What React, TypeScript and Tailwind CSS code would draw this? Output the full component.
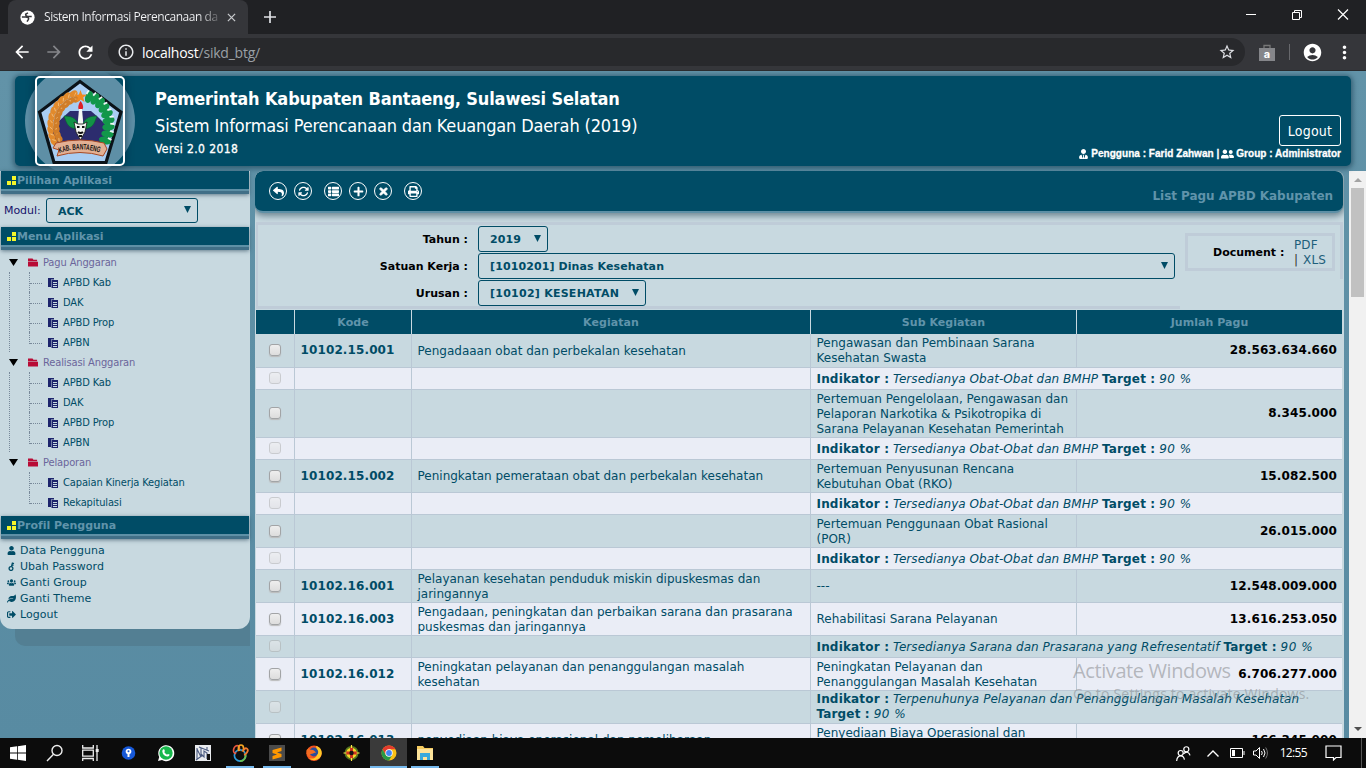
import React from "react";
import {
  FaReply, FaThList, FaPlus, FaTimes, FaPrint, FaUser, FaUserTie, FaUserFriends,
  FaUsers, FaLeaf, FaSignOutAlt,
} from "react-icons/fa";
import { FaArrowsRotate } from "react-icons/fa6";
import { MdArrowBack, MdArrowForward, MdRefresh, MdInfoOutline, MdStarBorder, MdAccountCircle, MdMoreVert } from "react-icons/md";

const verdana = "font-['DejaVu_Sans',sans-serif]";
const tahoma = "font-['DejaVu_Sans_Condensed','DejaVu_Sans',sans-serif] [font-stretch:condensed]";
const segoe = "font-['Open_Sans',sans-serif]";

function Globe() {
  return (
    <svg viewBox="0 0 16 16" className="h-[15px] w-[15px]">
      <circle cx="8" cy="8" r="7.6" fill="#fff" />
      <path d="M2 7.500H6C9 7.500 9.500 9 9 10L7.500 12.500M8.500 3 6 4.500Q6 7 9 7H12.500" fill="none" stroke="#35363a" strokeWidth="1.600" />
    </svg>
  );
}

function Browser() {
  return (
    <div className={`h-[71px] bg-[#202124] ${segoe}`}>
      <div className="flex h-[34px] items-stretch">
        <div className="ml-[8px] flex w-[240px] items-center rounded-t-[8px] bg-[#35363a] pl-[12px]">
          <Globe />
          <div className="ml-[9px] w-[176px] overflow-hidden whitespace-nowrap bg-gradient-to-r from-[#f4f5f7] from-88% to-[#f4f5f7]/15 bg-clip-text text-[12px] tracking-[-0.45px] text-transparent">
            Sistem Informasi Perencanaan da
          </div>
          <svg viewBox="0 0 10 10" className="ml-[7px] h-[9px] w-[9px]"><path d="M1 1 9 9M9 1 1 9" stroke="#c8cacd" strokeWidth="1.4" /></svg>
        </div>
        <svg viewBox="0 0 12 12" className="mt-[11px] ml-[16px] h-[12px] w-[12px]"><path d="M6 0V12M0 6H12" stroke="#dfe1e5" strokeWidth="1.7" /></svg>
        <div className="mt-[9px] ml-auto flex gap-[34px] pr-[17px]">
          <svg viewBox="0 0 12 12" className="h-[12px] w-[12px]"><path d="M1 5.5H11" stroke="#fff" /></svg>
          <svg viewBox="0 0 12 12" className="h-[12px] w-[12px]" fill="none" stroke="#fff"><path d="M1.5 3.5H8.5V10.5H1.5ZM3.5 3.5V1.5H10.5V8.5H8.5" /></svg>
          <svg viewBox="0 0 12 12" className="h-[12px] w-[12px]"><path d="M1 .5 11 10.5M11 .5 1 10.5" stroke="#fff" strokeWidth="1.2" /></svg>
        </div>
      </div>
      <div className="flex h-[37px] items-center border-b border-[#2a2c2f] bg-[#35363a] text-white">
        <MdArrowBack className="ml-[12px] h-[20px] w-[20px]" />
        <MdArrowForward className="ml-[12px] h-[20px] w-[20px] text-[#85868a]" />
        <MdRefresh className="ml-[11px] h-[21px] w-[21px]" />
        <div className="ml-[12px] flex h-[28px] w-[1137px] items-center rounded-full bg-[#28292c] pl-[9px]">
          <MdInfoOutline className="h-[18px] w-[18px] text-[#e8eaed]" />
          <div className="ml-[7px] text-[14px] tracking-[-0.23px] text-[#9aa0a6]"><span className="text-white">localhost</span>/sikd_btg/</div>
          <MdStarBorder className="mr-[9px] ml-auto h-[18px] w-[18px] text-[#dfe1e5]" />
        </div>
        <svg viewBox="0 0 16 17" className="ml-[14px] h-[17px] w-[16px]">
          <path d="M0 4H16V17H0Z" fill="#85868a" /><path d="M5 4V1.500H11V4" fill="none" stroke="#777" strokeWidth="1.3" />
          <text x="8" y="13.500" textAnchor="middle" fontSize="11" fontWeight="700" fill="#fff" fontFamily="Inter">a</text>
        </svg>
        <div className="ml-[14px] h-[16px] w-px bg-[#67686c]" />
        <MdAccountCircle className="ml-[12px] h-[21px] w-[21px]" />
        <MdMoreVert className="ml-[11px] h-[21px] w-[21px]" />
      </div>
    </div>
  );
}

const wheat = [[38, 18.5], [32, 20.5], [27, 24], [22.500, 28.500], [19.500, 33.500], [17.500, 39], [16.500, 45], [16.500, 51], [17.500, 57], [19.500, 62]];
const cotton = [[52, 19], [58, 21], [63, 25], [67, 30], [70, 36], [71.500, 42.500], [71.500, 49], [70.500, 56], [68, 62.500]];

function Emblem() {
  return (
    <svg viewBox="0 0 86 86" className="h-[86px] w-[86px]">
      <path d="M43 3.500 84 34 69 84.500H17L2.500 34Z" fill="#a9cdf3" stroke="#0b1218" strokeWidth="3.200" />
      <path d="M33 33H54L62 40 74 52 70 65H17L14 54 22 43Z" fill="#2c2c6e" />
      {wheat.map(([x, y], i) => (
        <g key={i} transform={`rotate(${60 - i * 11} ${x} ${y})`}>
          <ellipse cx={x - 3} cy={y} rx="3.100" ry="4.300" fill="#e28a2c" />
          <ellipse cx={x + 3} cy={y} rx="3.100" ry="4.300" fill="#d07d28" />
          <path d={`M${x - 3} ${y - 3}l2 3M${x + 3} ${y}l-2 3`} stroke="#f3bd78" strokeWidth=".9" />
        </g>
      ))}
      {cotton.map(([x, y], i) => (
        <g key={i} transform={`rotate(${-70 + i * 11} ${x} ${y})`}>
          <ellipse cx={x} cy={y} rx="6.200" ry="3.700" fill="#12974a" />
          <path d={`M${x + 2} ${y - 3.300}l4 .8`} stroke="#eef8f3" strokeWidth="1.700" />
        </g>
      ))}
      <path d="m43.500 12 1.600 4.500 4.800.2-3.700 2.900 1.300 4.500-4-2.500-4 2.500 1.300-4.500-3.700-2.900 4.800-.2Z" fill="#f18a21" />
      <path d="M43.500 23c4 5 3 9 0 9s-3-4 0-9Z" fill="#dc2027" />
      <path d="M42 31h3L46.500 48H40.500Z" fill="#f7f8f3" />
      <path d="M42 51C31 51 30 46 27 38c9 0 14 3 15 13ZM45 51c11 0 12-5 15-13-9 0-14 3-15 13Z" fill="#129246" stroke="#0a6230" strokeWidth=".6" />
      <path d="M37 44 41 46H46L50 44 48 54 43.500 62 39 54Z" fill="#f5f5f0" stroke="#161616" strokeWidth=".8" />
      <path d="M40 49h2.500M45 49h2.500M41 54q2.500 2 5 0M42 58h3" stroke="#111" strokeWidth="2" />
      <path d="M19 65Q43 59 67 65L70 71 66 78Q43 71 20 78L22 72 16 70Z" fill="#e3b094" stroke="#a84924" />
      <path id="ribbon" d="M22.500 75Q43 68 64.500 75" fill="none" />
      <text fontSize="8" fontWeight="700" fill="#111" fontFamily="Liberation Sans Narrow, Liberation Sans" textLength="41" lengthAdjust="spacingAndGlyphs"><textPath href="#ribbon">KAB. BANTAENG</textPath></text>
    </svg>
  );
}

function Header() {
  return (
    <div className="relative mt-[5px] ml-[15px] flex h-[90px] w-[1336px] rounded-[5px] bg-[#004c66] text-white shadow-[0_1px_5px_2px_rgba(30,70,90,.65)]">
      <div className="absolute top-[-10px] left-[10px] h-[110px] w-[110px] rounded-full bg-[#5e8fa6]" />
      <div className="relative ml-[20px] h-[90px] w-[90px] rounded-[5px] border-2 border-white shadow-[0_0_8px_rgba(0,40,60,.7)]"><Emblem /></div>
      <div className={`ml-[30px] flex-1 whitespace-nowrap ${tahoma}`}>
        <div className="mt-[12px] h-[22px] text-[18px] leading-[22px] font-bold tracking-[-0.15px]">Pemerintah Kabupaten Bantaeng, Sulawesi Selatan</div>
        <div className="mt-[4px] h-[24px] text-[18px] leading-[24px] tracking-[-0.15px]">Sistem Informasi Perencanaan dan Keuangan Daerah (2019)</div>
        <div className="mt-[2px] text-[12px] leading-[18px] tracking-[0.4px] [-webkit-text-stroke:0.3px_white]">Versi 2.0 2018</div>
      </div>
      <div className="mr-[10px] flex flex-col items-end">
        <div className={`mt-[39px] flex h-[31px] w-[62px] items-center justify-center rounded-[3px] border border-white pt-[2px] text-[14px] tracking-[0.2px] ${tahoma}`}>Logout</div>
        <div className="mt-[2px] flex items-center font-['Liberation_Sans',sans-serif] text-[10px] leading-[12px] font-bold tracking-[0.03px] whitespace-nowrap [-webkit-text-stroke:0.3px_white]">
          <FaUserTie className="mr-[3px] h-[10px] w-[9px]" />Pengguna : Farid Zahwan |<FaUserFriends className="mx-[2px] h-[12px] w-[13px]" />Group : Administrator
        </div>
      </div>
    </div>
  );
}

function SectionTitle({ children }: { children: string }) {
  return (
    <div className={`ml-px h-[23px] w-[248px] border-b-[3px] border-[#416f87] bg-[#5e90a6] shadow-[0_1px_4px_rgba(30,60,80,.6)] ${verdana}`}>
      <div className="flex h-[18px] items-center bg-[#004c66] pl-[6px] text-[11px] font-bold tracking-[-0.02px] text-[#6094ab]">
        <svg viewBox="0 0 9 9" className="mt-[1px] mr-px h-[9px] w-[9px]" fill="#f4f52a"><path d="M5 0H9V4H5ZM0 5H4V9H0ZM5 5H9V9H5Z" /></svg>
        <span className="pt-[2px]">{children}</span>
      </div>
    </div>
  );
}

function Select({ label, className }: { label: string; className: string }) {
  return (
    <div className={`flex items-center justify-between rounded-[3px] border border-[#004c66] pl-[11px] text-[#004c66] ${className}`}>
      <span className="pt-[2px]">{label}</span>
      <svg viewBox="0 0 7 7" className="mr-[6px] mb-[2px] h-[7px] w-[7px]" fill="#004c66"><path d="M0 0H7L3.500 7Z" /></svg>
    </div>
  );
}

const tree = [
  { name: "Pagu Anggaran", items: ["APBD Kab", "DAK", "APBD Prop", "APBN"] },
  { name: "Realisasi Anggaran", items: ["APBD Kab", "DAK", "APBD Prop", "APBN"] },
  { name: "Pelaporan", items: ["Capaian Kinerja Kegiatan", "Rekapitulasi"] },
];

function PageIcon() {
  return (
    <svg viewBox="0 0 10 10" className="h-[10px] w-[10px]">
      <path d="M0 0H6V1.500H3V9H0Z" fill="#1c246c" /><path d="M3.500 2H10V10H3.500Z" fill="#1c246c" />
      <path d="M5 4.500H9M5 6.500H9M5 8.500H9" stroke="#c8d9e0" />
    </svg>
  );
}

function Tree() {
  return (
    <div className={`h-[266px] pt-[2px] text-[11px] leading-[22px] tracking-[-0.12px] ${tahoma}`}>
      {tree.map((g, gi) => (
        <div key={g.name}>
          <div className="flex h-[20px] items-center text-[#6b659b]">
            <svg viewBox="0 0 9 7" className="ml-[9px] h-[7px] w-[9px]"><path d="M0 0H9L4.500 7Z" /></svg>
            <svg viewBox="0 0 11 9" className="mt-[1px] ml-[10px] h-[9px] w-[10px]"><path d="M0 0H5L6 1.500H10V3H0ZM0 3.600H11V9H0Z" fill="#b80c36" /></svg>
            <span className="ml-[5px] pt-[2px]">{g.name}</span>
          </div>
          <div className={`ml-[9px] ${gi < 2 ? "border-l border-dotted border-[#789]" : "border-l border-transparent"}`}>
            {g.items.map((t, i) => (
              <div key={i} className="ml-[19px] flex h-[20px] text-[#004c66]">
                <div className={`w-px border-l border-dotted border-[#789] ${i === g.items.length - 1 ? "h-[12px]" : "h-[20px]"}`} />
                <div className="h-[12px] w-[12px] border-b border-dotted border-[#789]" />
                <div className="mt-[6px] ml-[6px]"><PageIcon /></div>
                <span className="ml-[5px]">{t}</span>
              </div>
            ))}
          </div>
        </div>
      ))}
    </div>
  );
}

function KeyIcon({ className }: { className?: string }) {
  return (
    <svg viewBox="0 0 8 9" className={className} fill="none" stroke="#004c66" strokeWidth="1.300">
      <circle cx="3.500" cy="6.500" r="1.900" /><path d="M4 4.500 5 .7M4.700 1.200 6.500 1.700M4.300 2.900 6 3.400" />
    </svg>
  );
}

const profile = [
  { Icon: FaUser, name: "Data Pengguna" },
  { Icon: KeyIcon, name: "Ubah Password" },
  { Icon: FaUsers, name: "Ganti Group" },
  { Icon: FaLeaf, name: "Ganti Theme" },
  { Icon: FaSignOutAlt, name: "Logout" },
];

function Sidebar() {
  return (
    <div className={`mt-[5px] h-[572px] w-[250px] ${verdana}`}>
      <div className="relative z-10 h-[458px] rounded-b-[12px] bg-[#c8d9e0]">
        <SectionTitle>Pilihan Aplikasi</SectionTitle>
        <div className="flex h-[33px] pt-[4px] pl-[4px] text-[11px] leading-[26px] tracking-[-0.05px] text-[#16116a]">
          <span className="w-[42px]">Modul:</span>
          <Select label="ACK" className="h-[25px] w-[152px] text-[11px] font-bold" />
        </div>
        <SectionTitle>Menu Aplikasi</SectionTitle>
        <Tree />
        <SectionTitle>Profil Pengguna</SectionTitle>
        <div className="pt-[4px]">
          {profile.map(({ Icon, name }) => (
            <div key={name} className="flex h-[16px] items-center pl-[7px] text-[11px] tracking-[0.02px] text-[#004c66]">
              <Icon className="mr-[4px] mb-px h-[9px] w-[9px]" />{name}
            </div>
          ))}
        </div>
      </div>
      <div className="mt-[-12px] ml-[15px] h-[29px] rounded-bl-[10px] bg-[#537f93]" />
    </div>
  );
}

function Round({ children, className = "" }: { children: React.ReactNode; className?: string }) {
  return <div className={`flex h-[18px] w-[18px] items-center justify-center rounded-full border-[1.5px] border-white text-[11px] ${className}`}>{children}</div>;
}

type Row = { kode?: string; kegiatan?: string; sub?: string[]; jumlah?: string; ind?: string; h: string };
const obat = "Tersedianya Obat-Obat dan BMHP";
const rows: Row[] = [
  { kode: "10102.15.001", kegiatan: "Pengadaaan obat dan perbekalan kesehatan", sub: ["Pengawasan dan Pembinaan Sarana", "Kesehatan Swasta"], jumlah: "28.563.634.660", h: "h-[34px]" },
  { ind: obat, h: "h-[22px]" },
  { sub: ["Pertemuan Pengelolaan, Pengawasan dan", "Pelaporan Narkotika & Psikotropika di", "Sarana Pelayanan Kesehatan Pemerintah"], jumlah: "8.345.000", h: "h-[48px]" },
  { ind: obat, h: "h-[22px]" },
  { kode: "10102.15.002", kegiatan: "Peningkatan pemerataan obat dan perbekalan kesehatan", sub: ["Pertemuan Penyusunan Rencana", "Kebutuhan Obat (RKO)"], jumlah: "15.082.500", h: "h-[33px]" },
  { ind: obat, h: "h-[22px]" },
  { sub: ["Pertemuan Penggunaan Obat Rasional", "(POR)"], jumlah: "26.015.000", h: "h-[33px]" },
  { ind: obat, h: "h-[22px]" },
  { kode: "10102.16.001", kegiatan: "Pelayanan kesehatan penduduk miskin dipuskesmas dan\njaringannya", sub: ["---"], jumlah: "12.548.009.000", h: "h-[33px]" },
  { kode: "10102.16.003", kegiatan: "Pengadaan, peningkatan dan perbaikan sarana dan prasarana\npuskesmas dan jaringannya", sub: ["Rehabilitasi Sarana Pelayanan"], jumlah: "13.616.253.050", h: "h-[33px]" },
  { ind: "Tersedianya Sarana dan Prasarana yang Refresentatif", h: "h-[22px]" },
  { kode: "10102.16.012", kegiatan: "Peningkatan pelayanan dan penanggulangan masalah\nkesehatan", sub: ["Peningkatan Pelayanan dan", "Penanggulangan Masalah Kesehatan"], jumlah: "6.706.277.000", h: "h-[33px]" },
  { ind: "Terpenuhunya Pelayanan dan Penanggulangan Masalah Kesehatan", h: "h-[33px]" },
  { kode: "10102.16.013", kegiatan: "penyediaan biaya operasional dan pemeliharaan", sub: ["Penyediaan Biaya Operasional dan", "Pemeliharaan"], jumlah: "166.345.000", h: "h-[33px]" },
];

const cols = "grid grid-cols-[39px_117px_399px_266px_265px]";

function Table() {
  return (
    <div className="ml-[1px] w-[1086px] text-[12px] leading-[15px] text-[#004c66]">
      <div className={`${cols} h-[24px] bg-[#004c66] text-center text-[11px] leading-[25px] font-bold tracking-[0.05px] text-[#6094ab]`}>
        {["", "Kode", "Kegiatan", "Sub Kegiatan", "Jumlah Pagu"].map((t, i) => <div key={i} className={i < 4 ? "border-r border-[#c8d9e0]" : ""}>{t}</div>)}
      </div>
      {rows.map((r, i) => {
        const cell = "flex items-center border-r border-b border-[#bac8d5] pl-[5.5px] whitespace-pre";
        return (
          <div key={i} className={`${cols} ${r.h} ${i % 2 ? "bg-[#eaedf6]" : "bg-[#c8d9e0]"}`}>
            <div className="flex items-center justify-center border-r border-b border-[#bac8d5] pb-px">
              <div className={`h-[12px] w-[12px] rounded-[3px] border bg-gradient-to-b from-[#eee] to-[#ddd] ${r.ind ? "border-[#aaa] opacity-50" : "border-[#a2a4a6] shadow-[0_1px_1px_#bbb]"}`} />
            </div>
            <div className={`${cell} text-[12px] font-bold tracking-[0.12px]`}>{r.kode}</div>
            <div className={`${cell} pt-px`}>{r.kegiatan}</div>
            {r.ind ? (
              <div className={`col-span-2 flex items-center border-b border-[#bac8d5] pl-[5.5px] ${r.h === "h-[33px]" ? "" : "pt-px"}`}>
                <div className="w-[520px] tracking-[0.05px]"><b className="tracking-[0.18px]">Indikator :</b> <i>{r.ind}</i> <b className="tracking-[0.15px]">Target :</b> <i className="tracking-[0.5px]">90 %</i></div>
              </div>
            ) : (
              <>
                <div className={`${cell} pt-px`}>{r.sub?.join("\n")}</div>
                <div className="flex items-center justify-end border-b border-[#bac8d5] pr-[5px] text-[12px] font-bold tracking-[0.12px] text-black">{r.jumlah}</div>
              </>
            )}
          </div>
        );
      })}
    </div>
  );
}

function Main() {
  return (
    <div className={`relative mt-[5px] ml-[5px] h-[567px] w-[1089px] overflow-hidden rounded-t-[8px] bg-[#c8d9e0] ${verdana}`}>
      <div className="flex h-[42px] w-[1088px] items-center rounded-[8px] border-b-2 border-[#5e90a6] bg-[#004c66] pl-[14px] text-white shadow-[0_1px_6px_2px_rgba(50,80,95,.6)]">
        <Round><FaReply /></Round>
        <Round className="ml-[7px]"><FaArrowsRotate /></Round>
        <Round className="ml-[12px]"><FaThList /></Round>
        <Round className="ml-[7px]"><FaPlus /></Round>
        <Round className="ml-[7px]"><FaTimes stroke="#fff" strokeWidth="40" /></Round>
        <Round className="ml-[12px]"><FaPrint /></Round>
        <div className="mt-[10px] mr-[10px] ml-auto text-[12px] font-bold tracking-[-0.05px] text-[#6094ab]">List Pagu APBD Kabupaten</div>
      </div>
      <div className="flex h-[97px] pt-[9px]">
        <div className="ml-[1px] h-[87px] w-[924px] border-y-[3px] border-l-2 border-[#bfccd8] text-[11px] font-bold text-black">
          {[
            ["Tahun :", "2019", "w-[70px] tracking-[0.1px]"],
            ["Satuan Kerja :", "[1010201] Dinas Kesehatan", "w-[697px] tracking-[0.1px]"],
            ["Urusan :", "[10102] KESEHATAN", "w-[168px] tracking-[0.25px]"],
          ].map(([a, b, w]) => (
            <div key={a} className="flex h-[27px] items-center">
              <div className="w-[210px] pt-[3px] text-right">{a}</div>
              <Select label={b} className={`ml-[10px] mt-px h-[26px] ${w}`} />
            </div>
          ))}
        </div>
        <div className="h-[57px] w-[163px] border-t-[3px] border-r-[3px] border-[#bfccd8] pt-[8px] pl-[5px]">
          <div className="flex h-[38px] w-[150px] items-center border-[3px] border-[#bfccd8] pt-px pl-[25px]">
            <b className="w-[81px] pt-px text-[11px] whitespace-nowrap text-black">Document :</b>
            <div className="text-[12px] leading-[15px] tracking-[0.1px] whitespace-nowrap text-[#1e5f7b]">PDF<br /><span className="mr-px text-[#333]">|</span> XLS</div>
          </div>
        </div>
      </div>
      <Table />
      <div className={`absolute top-[487px] left-[818px] whitespace-nowrap text-[#85888c]/55 ${segoe}`}>
        <div className="text-[20px] leading-[25px] tracking-[-0.4px]">Activate Windows</div>
        <div className="text-[14px] leading-[21px] tracking-[0.2px]">Go to Settings to activate Windows.</div>
      </div>
    </div>
  );
}

function Scrollbar() {
  return (
    <div className="mt-[5px] ml-[5px] flex h-[567px] w-[17px] flex-col items-center bg-[#f1f1f1]">
      <svg viewBox="0 0 8 4" className="mt-[7px] h-[4px] w-[8px]"><path d="M0 4 4 0 8 4Z" fill="#a3a3a3" /></svg>
      <div className="mt-[6px] h-[109px] w-[13px] bg-[#c1c1c1]" />
      <svg viewBox="0 0 8 4" className="mt-auto mb-[7px] h-[4px] w-[8px]"><path d="M0 0 4 4 8 0Z" fill="#505050" /></svg>
    </div>
  );
}

function Task({ children, on = false, active = false }: { children: React.ReactNode; on?: boolean; active?: boolean }) {
  return (
    <div className={`flex h-[30px] w-[37px] flex-col items-center ${active ? "bg-[#3a3a3a]" : "pr-px"}`}>
      <svg viewBox="0 0 16 16" className="mt-[7px] h-[16px] w-[16px] overflow-visible">{children}</svg>
      {(on || active) && <div className={`mt-auto h-[2px] bg-[#76b9ed] ${active ? "w-full" : "w-[28px]"}`} />}
    </div>
  );
}

function Taskbar() {
  return (
    <div className="flex h-[30px] bg-[#0c0c0c]">
      <Task><path d="M0 2.300 7 1.300V7.600H0ZM7.800 1.200 16 0V7.600H7.800ZM0 8.400H7V14.700L0 13.700ZM7.800 8.400H16V16L7.800 14.800Z" fill="#fff" /></Task>
      <Task><g fill="none" stroke="#eee" strokeWidth="1.400"><circle cx="10" cy="5.500" r="5" /><path d="M6.500 9.200 0 16" /></g></Task>
      <Task><g fill="none" stroke="#eee" strokeWidth="1.300"><path d="M-1.300 0V3H9.300V0M-1.300 5.200H9.300V11.200H-1.300ZM-1.300 16V13.500H9.300V16M13 0V16" /></g><rect x="11.700" y="4" width="3" height="3" fill="#eee" /></Task>
      <Task><circle cx="7.500" cy="8" r="6.800" fill="#1658d8" /><circle cx="7.500" cy="6.500" r="2.800" fill="#fff" /><path d="M6.500 8H8.500V12H6.500Z" fill="#fff" /><circle cx="7.500" cy="6.300" r="1" fill="#1658d8" /></Task>
      <Task><path d="M0 16 1.200 12A8 8 0 1 1 4 15Z" fill="#fff" /><circle cx="8" cy="8" r="6.700" fill="#18b84c" /><path d="M5.200 4.200 6.400 4.500 6.900 6.200 6.200 7.100Q7.200 8.900 9 9.700L9.900 8.900 11.600 9.600Q11.500 11.700 9.300 11.600 5 10.700 4.300 6.400 4.300 5 5.200 4.200Z" fill="#fff" /></Task>
      <Task><path d="M0 0H16V16H0Z" fill="#e9ebee" /><path d="M2 3V14M2 4 6 12V3M6 9 9 12V6L12 8V14M1 15 8 10M4 2 14 6M12 2V6" fill="none" stroke="#4a5a80" strokeWidth="1.100" /><path d="M12 9H15V15H12Z" fill="#111" /></Task>
      <Task on><g fill="none" strokeWidth="1.700"><circle cx="8" cy="10.500" r="5.600" stroke="#2d9cdb" /><path d="M8 16.100A5.600 5.600 0 0 0 13.500 9" stroke="#6cc24a" /><ellipse cx="4.500" cy="4.500" rx="2.800" ry="4" stroke="#e9573f" transform="rotate(20 4.500 4.500)" /><ellipse cx="9" cy="3.500" rx="2.600" ry="3.500" stroke="#f5a623" /><ellipse cx="13" cy="6.500" rx="2.200" ry="3.500" stroke="#f37b2d" transform="rotate(35 13 6.500)" /></g><circle cx="8" cy="10" r="4" fill="#0c0c0c" /></Task>
      <Task on><rect width="16" height="16" fill="#4b4b4b" /><path d="M12.500 2.500V6L8 7.500l4.500 1.500V12L3.500 14.500V11L8 9.500 3.500 8V5Z" fill="#ff9800" /></Task>
      <Task><circle cx="8" cy="8.300" r="7.700" fill="#f4511e" /><path d="M10 1c5 1 7 6 5 10s-8 6-12 2c6 2 9-2 8-6Z" fill="#ffc928" /><circle cx="7.800" cy="7" r="4.400" fill="#284d9b" /><path d="M.5 5 3 3l1 2c3-1 5 1 6 3-2-1-3 1-5 1S3 12 7 12c-4 2-7-2-6.500-7Z" fill="#f36c21" /></Task>
      <Task><circle cx="8.500" cy="8" r="7" fill="#56791f" /><circle cx="8.500" cy="8" r="5.300" fill="#f5d92a" /><path d="M8.500 2.500V13.500M3 8H14" stroke="#cf321f" strokeWidth="3" /><circle cx="8.500" cy="8" r="2.200" fill="#151515" /><path d="M8.500 0V3M8.500 13V16M.5 8H3.500M13.500 8H16.500" stroke="#ffe94a" strokeWidth="1.200" /></Task>
      <Task active><circle cx="8" cy="8" r="7.500" fill="#fbc116" /><path d="M1.500 4.250A7.500 7.500 0 0 1 14.500 4.250H8L4.800 9.900Z" fill="#e33b2e" /><path d="M1.500 4.250A7.500 7.500 0 0 0 8 15.500L11.200 9.900H4.800Z" fill="#279847" /><circle cx="8" cy="8" r="3.700" fill="#fff" /><circle cx="8" cy="8" r="2.900" fill="#4285f4" /></Task>
      <Task on><path d="M0 1H6L7.500 3H16V15H0Z" fill="#f6cc60" /><path d="M0 4H16V15H0Z" fill="#fde39a" /><path d="M3 8H13V15H10V12H6V15H3Z" fill="#37a9dc" /></Task>
      <div className="ml-auto flex items-center text-white">
        <svg viewBox="0 0 16 16" className="h-[15px] w-[15px]" fill="none" stroke="#fff" strokeWidth="1.300"><circle cx="5" cy="7.500" r="2.700" /><path d="M.7 16C1 12 2.800 10.500 5 10.500S8.500 12 9 14.500" /><circle cx="11" cy="3.500" r="2.700" /><path d="M8 8.500C11 5 14 6.500 15 10" /></svg>
        <svg viewBox="0 0 12 7" className="ml-[16px] h-[7px] w-[12px]" fill="none" stroke="#fff" strokeWidth="1.400"><path d="m.5 6.500 5.500-5.500 5.500 5.500" /></svg>
        <svg viewBox="0 0 15 10" className="ml-[11px] h-[10px] w-[15px]" fill="none" stroke="#fff"><path d="M.5.5H12.500V9.500H.5ZM14 3V7" /><path d="M2 2H5V8H2Z" fill="#fff" stroke="none" /></svg>
        <svg viewBox="0 0 15 14" className="ml-[8px] h-[14px] w-[15px]" fill="none" stroke="#fff"><path d="M.5 5H3L6.500 1.500V12.500L3 9H.5ZM8.500 5q1.500 2 0 4M10.500 3q3 4 0 8" /><path d="M12.700 1.500q3.500 5.500 0 11" stroke="#777" /></svg>
        <span className={`ml-[12px] text-[12px] tracking-[-0.65px] ${segoe}`}>12:55</span>
        <svg viewBox="0 0 17 16" className="ml-[18px] h-[16px] w-[17px]" fill="none" stroke="#fff" strokeWidth="1.200"><path d="M1 1H16V12.500H11L8.500 15V12.500H1Z" /></svg>
        <div className="mr-[4px] ml-[19px] h-[30px] w-px bg-[#555]" />
      </div>
    </div>
  );
}

export default function App() {
  return (
    <div className="flex h-[768px] w-[1366px] flex-col overflow-hidden">
      <Browser />
      <div className="h-[667px] overflow-hidden bg-gradient-to-b from-[#6293a8] to-[#588ba2]">
        <Header />
        <div className="flex">
          <Sidebar />
          <Main />
          <Scrollbar />
        </div>
      </div>
      <Taskbar />
    </div>
  );
}
